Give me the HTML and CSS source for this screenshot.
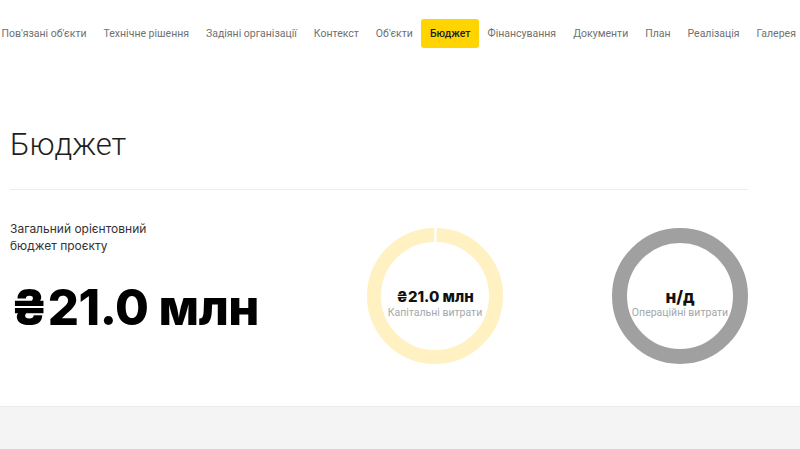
FILE: index.html
```html
<!DOCTYPE html>
<html lang="uk">
<head>
<meta charset="utf-8">
<link rel="stylesheet" href="styles.css">
</head>
<body>
<nav class="tabs">
  <a class="tab">Пов'язані об'єкти</a>
  <a class="tab">Технічне рішення</a>
  <a class="tab">Задіяні організації</a>
  <a class="tab">Контекст</a>
  <a class="tab">Об'єкти</a>
  <a class="tab active">Бюджет</a>
  <a class="tab">Фінансування</a>
  <a class="tab">Документи</a>
  <a class="tab">План</a>
  <a class="tab">Реалізація</a>
  <a class="tab">Галерея</a>
</nav>
<main class="budget">
  <h1 class="title">Бюджет</h1>
  <div class="content">
    <div class="total">
      <p class="label">Загальний орієнтовний<br>бюджет проєкту</p>
      <div class="amount">₴21.0 млн</div>
    </div>
    <div class="ring ring-capex">
      <svg class="ring-svg" viewBox="0 0 136 136" width="136" height="136">
        <circle cx="68" cy="68" r="61" fill="none" stroke="#fff1c2" stroke-width="14" stroke-dasharray="380.3 3" transform="rotate(-88.5 68 68)"/>
      </svg>
      <div class="ring-text">
        <div class="ring-value">₴21.0 млн</div>
        <div class="ring-label">Капітальні витрати</div>
      </div>
    </div>
    <div class="ring ring-opex">
      <svg class="ring-svg" viewBox="0 0 136 136" width="136" height="136">
        <circle cx="68" cy="68" r="60.5" fill="none" stroke="#a0a0a0" stroke-width="15"/>
      </svg>
      <div class="ring-text">
        <div class="ring-value">н/д</div>
        <div class="ring-label">Операційні витрати</div>
      </div>
    </div>
  </div>
</main>
<footer class="footer"></footer>
</body>
</html>
```

FILE: styles.css
```css
* { box-sizing: border-box; }
html, body { margin: 0; padding: 0; background: #fff; }
body {
  font-family: "Inter", "Roboto", "Noto Sans", sans-serif;
  color: #222;
  width: 800px;
  overflow: hidden;
}
.tabs {
  display: flex;
  align-items: center;
  white-space: nowrap;
  padding-top: 19px;
  margin-left: -7px;
  height: 48px;
}
.tab {
  display: block;
  padding: 0 8.5px;
  height: 29px;
  line-height: 29px;
  font-family: "Roboto", sans-serif;
  font-size: 10.5px;
  color: #707070;
  border-radius: 3px;
  text-decoration: none;
  flex: none;
}
.tab.active {
  background: #ffd400;
  color: #222;
  font-weight: 500;
}
.budget {
  padding: 0 52px 0 10px;
  height: 358px;
}
.title {
  margin: 0;
  padding-top: 79px;
  font-family: "Roboto", "Liberation Sans", sans-serif;
  font-weight: 300;
  font-size: 31px;
  line-height: 36px;
  color: #1e1e1e;
  padding-bottom: 26px;
  border-bottom: 1px solid #ececec;
}
.content {
  display: flex;
  align-items: flex-start;
  padding-top: 30px;
}
.total { flex: 1; }
.label {
  margin: 0;
  font-size: 12px;
  line-height: 17px;
  color: #333;
}
.amount {
  margin-top: 28px;
  font-family: "Inter", sans-serif;
  font-weight: 800;
  font-size: 49px;
  line-height: 52px;
  color: #000;
  letter-spacing: -0.5px;
}
.ring {
  position: relative;
  width: 136px;
  height: 136px;
  margin-top: 8px;
  flex: none;
}
.ring-capex { margin-right: 109px; }
.ring-svg { display: block; }
.ring-text {
  position: absolute;
  inset: 0;
  display: flex;
  flex-direction: column;
  align-items: center;
  justify-content: center;
  padding-top: 16px;
}
.ring-value {
  font-weight: 800;
  font-size: 15px;
  line-height: 18px;
  color: #111;
}
.ring-opex .ring-value { font-size: 17px; }
.ring-label {
  font-family: "Roboto", sans-serif;
  font-size: 10.5px;
  line-height: 14px;
  color: #a3a7ab;
  white-space: nowrap;
}
.footer {
  height: 43px;
  background: #f4f4f4;
  border-top: 1px solid #ececec;
}
```
